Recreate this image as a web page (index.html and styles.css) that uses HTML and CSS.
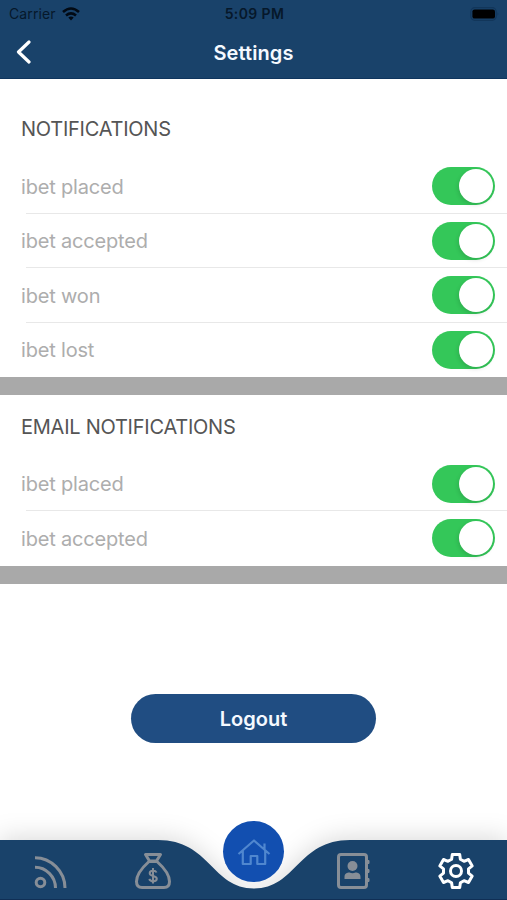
FILE: index.html
```html
<!DOCTYPE html>
<html lang="en">
<head>
<meta charset="utf-8">
<title>Settings</title>
<link rel="stylesheet" href="styles.css">
</head>
<body>
<div class="screen">
  <header class="header">
    <div class="status">
      <div class="carrier"><span>Carrier</span>
        <svg width="18" height="14" viewBox="0 0 18 14" fill="none" stroke="#020a14" stroke-width="2.6"><path d="M1 5Q9-2 17 5M4 8.4Q9 4.2 14 8.4"/><path d="M6.3 10.6Q9 8.6 11.7 10.6L9 13.5Z" fill="#020a14" stroke="none"/></svg>
      </div>
      <div class="time">5:09 PM</div>
      <svg class="battery" width="30" height="14" viewBox="0 0 30 14"><rect x=".8" y=".7" width="25.4" height="12.6" rx="4" fill="none" stroke="#12365a" stroke-width="1.2"/><rect x="2.4" y="2.4" width="22.6" height="9.2" rx="2.2" fill="#000"/><path d="M27.5 5Q29.3 7 27.5 9Z" fill="#12365a"/></svg>
    </div>
    <div class="nav">
      <svg class="back" width="16" height="26" viewBox="0 0 16 26" fill="none" stroke="#fff" stroke-width="3.2" stroke-linecap="round" stroke-linejoin="round"><path d="M14 3L3.500 13L14 23"/></svg>
      <h1 class="title">Settings</h1>
    </div>
  </header>
  <main class="content">
    <section class="group">
      <h2 class="heading first">NOTIFICATIONS</h2>
      <div class="row"><span>ibet placed</span><i class="switch"></i></div>
      <div class="row"><span>ibet accepted</span><i class="switch"></i></div>
      <div class="row"><span>ibet won</span><i class="switch"></i></div>
      <div class="row"><span>ibet lost</span><i class="switch"></i></div>
    </section>
    <section class="group">
      <h2 class="heading email">EMAIL NOTIFICATIONS</h2>
      <div class="row"><span>ibet placed</span><i class="switch"></i></div>
      <div class="row"><span>ibet accepted</span><i class="switch"></i></div>
    </section>
    <button class="logout">Logout</button>
  </main>
  <nav class="tabbar">
    <svg class="bar" width="507" height="60" viewBox="0 0 507 60"><path d="M0 0H158C210 0 212 48.500 254 48.500S298 0 350 0H507V60H0Z" fill="#19426a"/><path d="M0 59.500H507" stroke="#102f55"/></svg>
    <div class="tabs">
      <a class="tab"><svg width="36" height="36" viewBox="1 0 36 36" fill="none" stroke="#878e97" stroke-width="3"><circle cx="7.500" cy="28.500" r="4.300"/><path d="M2 13.300C13 13.300 22.500 22.500 22.500 34M2 3.700C18 3.700 32 17.500 32 34"/></svg></a>
      <a class="tab"><svg width="40" height="40" viewBox="0 0 40 40" fill="none" stroke="#878e97" stroke-width="3" stroke-linejoin="round"><path d="M12.500 3.500H27.500L23.500 10H16.500ZM16 10.500C11 15 3.500 22 3.500 30.500C3.500 35 6 36.500 9 36.500H31C34 36.500 36.500 35 36.500 30.500C36.500 22 29 15 24 10.500Z"/><path d="M23.500 21.500C22.500 19 16.700 19 16.700 22.200C16.700 25.700 23.800 24.200 23.800 27.800C23.800 31 17.500 31 16.200 28M20 17V32.500" stroke-width="2"/></svg></a>
      <a class="tab"><span class="home"><svg width="34" height="30" viewBox="0 0 34 30" fill="none" stroke="#5087cf" stroke-width="2.200" stroke-linejoin="round"><path d="M1.500 17L17 3.500L32.500 17M5.800 13.800V27H13.700V19H20.300V27H28.200V13.800M27.500 12V6.500"/></svg></span></a>
      <a class="tab"><svg width="36" height="40" viewBox="2 0 36 40"><rect x="3.500" y="3.500" width="28" height="33" rx="2.500" fill="none" stroke="#878e97" stroke-width="3"/><path d="M32 9.500H34V12.500H32ZM32 18.500H34V21.500H32ZM32 27.500H34V30.500H32Z" fill="#878e97" stroke="#878e97"/><circle cx="17.500" cy="15" r="5" fill="#878e97"/><path d="M9.500 28V26C9.500 22.500 12 21.500 14.500 21.500Q17.500 23 20.500 21.500C23 21.500 25.500 22.500 25.500 26V28Z" fill="#878e97"/></svg></a>
      <a class="tab"><svg width="40" height="40" viewBox="0 0 40 40" fill="none" stroke="#fff" stroke-width="3" stroke-linejoin="round"><path d="M16.300 3.500H23.700L24.400 8.200L28 10.300L32.500 8.500L36.200 14.900L32.500 17.900V22.100L36.200 25.100L32.500 31.500L28 29.700L24.400 31.800L23.700 36.500H16.300L15.600 31.800L12 29.700L7.500 31.500L3.800 25.100L7.500 22.100V17.900L3.800 14.900L7.500 8.500L12 10.300L15.600 8.200Z"/><circle cx="20" cy="20" r="5.500"/></svg></a>
    </div>
  </nav>
</div>
</body>
</html>
```
FILE: styles.css
```css
* { box-sizing: border-box; }
body { margin: 0; background: #fff; font-family: Inter, "Liberation Sans", sans-serif; }
.screen { display: flex; flex-direction: column; height: 900px; width: 507px; overflow: hidden; }
.header { height: 79px; background: #19426a; border-bottom: 1px solid #0f355e; flex: none; }
.status { display: grid; grid-template-columns: 1fr auto 1fr; align-items: center; height: 28px; padding: 0 7px 1px 9px; color: #06182a; }
.carrier { display: flex; align-items: center; gap: 6px; font-size: 14px; letter-spacing: .1px; }
.time { font-size: 14px; font-weight: 600; letter-spacing: .4px; }
.battery { justify-self: end; }
.nav { display: grid; grid-template-columns: 1fr auto 1fr; align-items: center; height: 48px; padding: 0 15px; }
.title { margin: 1px 0 0; font-size: 20px; line-height: 26px; font-weight: 600; letter-spacing: .1px; color: #f5f9ff; }
.content { flex: 1; display: flex; flex-direction: column; }
.group { border-bottom: 18px solid #a9a9a9; }
.heading { margin: 0; padding-left: 21px; font-size: 20px; font-weight: 400; letter-spacing: -.25px; color: #555; }
.first { height: 80px; line-height: 101px; }
.email { height: 61.5px; line-height: 64px; }
.row { display: flex; align-items: center; justify-content: space-between; height: 54.5px; padding: 0 12px 0 21px; font-size: 20px; letter-spacing: -.18px; color: #adadad; background: linear-gradient(#e8e8e8, #e8e8e8) 26px 100% / 100% 1px no-repeat; }
.row span { padding-top: 1px; }
.row:last-child { background: none; }
.switch { display: flex; justify-content: flex-end; width: 63px; height: 38px; padding: 2px; border-radius: 19px; background: #34c759; }
.switch::after { content: ""; width: 34px; height: 34px; border-radius: 50%; background: #fff; box-shadow: -1px 2px 4px rgba(0,0,0,.12); }
.logout { align-self: center; margin-top: 110px; width: 245px; height: 49px; padding: 2px 0 0; border: 0; border-radius: 25px; background: #204d82; color: #f5f9ff; font: 600 20px Inter, sans-serif; }
.tabbar { position: relative; height: 60px; flex: none; }
.bar { position: absolute; inset: 0; filter: drop-shadow(0 -3px 12px rgba(0,0,0,.14)); }
.tabs { position: relative; display: grid; grid-template-columns: repeat(5, 101px); justify-content: center; height: 60px; }
.tab { display: flex; justify-content: center; align-items: center; padding-bottom: 0; }
.tab:nth-child(1) { padding-top: 2px; }
.tab:nth-child(2), .tab:nth-child(4), .tab:nth-child(5) { padding-top: 1px; }
.home { display: flex; align-items: center; justify-content: center; flex: none; width: 61px; height: 61px; border-radius: 50%; background: #124fb0; transform: translateY(-19px); }
```
